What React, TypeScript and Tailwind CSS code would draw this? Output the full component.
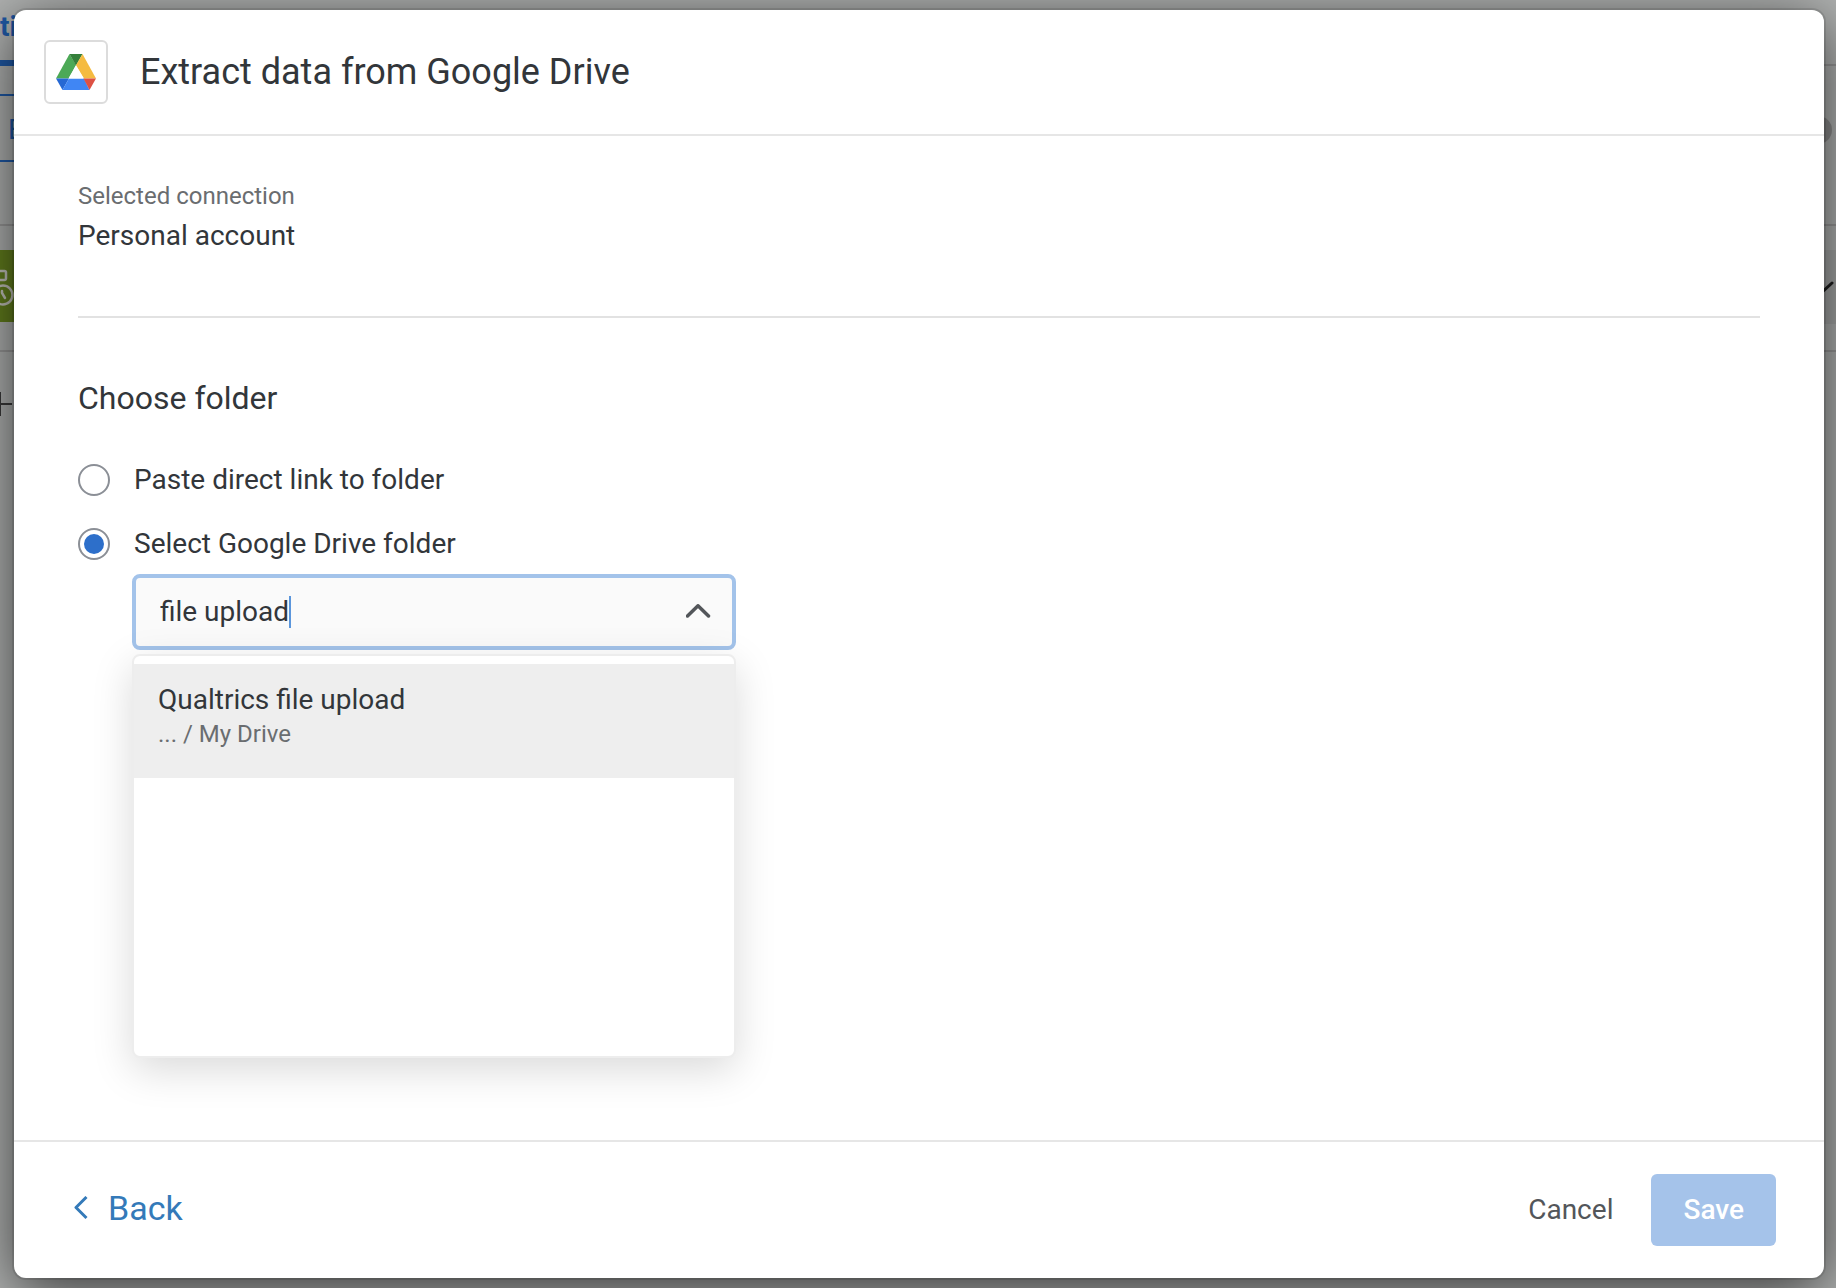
import React, { useState } from "react";

type FolderMode = "link" | "select";

type Folder = {
  name: string;
  path: string;
};

const folders: Folder[] = [{ name: "Qualtrics file upload", path: "... / My Drive" }];

const DriveLogo = () => (
  <svg viewBox="0 0 40 36" className="h-9 w-10" aria-hidden="true">
    <path d="M13.5 0 0 24.5h12.5L20 11z" fill="#4ca956" />
    <path d="M13.5 0h13L20 11.5z" fill="#35803b" />
    <path d="M26.5 0 20 11.2l8 13.3h12z" fill="#f5bb41" />
    <path d="M0 24.5h13L6.5 36z" fill="#2668d4" />
    <path d="M13 24.5h15L33.5 36H6.5z" fill="#4086f4" />
    <path d="M27.5 24.5H40L33.5 36z" fill="#dd5144" />
    <path d="M20 11.5 27.6 24.5H12.6z" fill="#fff" />
  </svg>
);

// The workflow editor, dimmed behind the dialog
const EditorPage = () => (
  <div className="min-h-screen bg-[#b0b2b1]" aria-hidden="true">
    <div className="flex h-[66px] justify-between">
      <div className="flex w-8 flex-col justify-end overflow-hidden border-b-6 border-[#1f5aa8]">
        <span className="pb-3 text-[28px] font-bold text-[#1f5aa8]">ti</span>
      </div>
      <div className="flex-1 border-b-2 border-[#989898]" />
    </div>
    <div className="flex h-40 items-start justify-between border-b-2 border-[#989898] pt-7">
      <div className="flex h-[68px] w-8 items-center border-y-2 border-[#1f5aa8] pt-1 pl-2">
        <span className="text-[28px] leading-8 text-[#1f5aa8]">E</span>
      </div>
      <div className="mt-[22px] mr-1 size-7 rounded-full bg-[#8c8c8c]" />
    </div>
    <div className="flex h-[126px] items-start justify-between border-b-2 border-[#989898] pt-6">
      <div className="flex h-[72px] w-8 items-center bg-[#637f1d]">
        <svg viewBox="0 0 14 40" className="h-10 w-3.5" fill="none" stroke="#c4c4bc" strokeWidth="2.500">
          <path d="M0 5h4.500a1.500 1.500 0 0 1 1.500 1.500v6a1.500 1.500 0 0 1-1.500 1.500H0" />
          <circle cx="3" cy="29" r="9.500" />
          <path d="M2 25v2l3 5" strokeLinecap="round" />
        </svg>
      </div>
      <div className="flex h-[74px] flex-1 items-center justify-end bg-[#a5a7a6]">
        <svg viewBox="0 0 14 14" className="mr-0.5 size-3.5" fill="none" stroke="#1e1e1e" strokeWidth="3" strokeLinecap="round">
          <path d="M12 3 0 14" />
        </svg>
      </div>
    </div>
    <svg viewBox="0 0 14 24" className="mt-10 h-6 w-3.5" stroke="#3a3a3a" strokeWidth="2">
      <path d="M0 0v24M0 12h12" />
    </svg>
  </div>
);

const App = () => {
  const [mode, setMode] = useState<FolderMode>("select");
  const [query, setQuery] = useState("file upload");

  const radioClass =
    "grid size-8 shrink-0 appearance-none place-items-center rounded-full border-2 border-[#8b8f96] bg-white before:size-5 before:rounded-full checked:before:bg-[#2d6fca]";

  return (
    <div className="relative min-h-screen overflow-hidden font-[Roboto,sans-serif] text-[#32363a]">
      <EditorPage />

      <div className="absolute inset-0 flex py-2.5 pr-3 pl-3.5">
        <div
          role="dialog"
          aria-labelledby="dialog-title"
          className="flex flex-1 flex-col rounded-xl bg-white shadow-[0_0_0_2px_rgba(0,0,0,0.1),0_12px_60px_rgba(0,0,0,0.7)]"
        >
          <header className="flex items-center gap-8 border-b-2 border-[#e6e6e6] px-[30px] py-[30px]">
            <div className="flex size-16 items-center justify-center rounded-md border-2 border-[#dcdcdc]">
              <DriveLogo />
            </div>
            <h1 id="dialog-title" className="text-[36px] leading-10">
              Extract data from Google Drive
            </h1>
          </header>

          <main className="flex-1 px-16 pt-11">
            <div className="border-b-2 border-[#e2e2e2] pb-15">
              <p className="text-[24px] leading-8 text-[#6a6d70]">Selected connection</p>
              <p className="mt-1 text-[28px] leading-10">Personal account</p>
            </div>

            <h2 className="mt-[58px] text-[32px] leading-11">Choose folder</h2>

            <div className="mt-10 flex flex-col gap-6">
              <label className="flex items-center gap-6 text-[28px] leading-10">
                <input
                  type="radio"
                  name="mode"
                  checked={mode === "link"}
                  onChange={() => setMode("link")}
                  className={radioClass}
                />
                Paste direct link to folder
              </label>
              <label className="flex items-center gap-6 text-[28px] leading-10">
                <input
                  type="radio"
                  name="mode"
                  checked={mode === "select"}
                  onChange={() => setMode("select")}
                  className={radioClass}
                />
                Select Google Drive folder
              </label>
            </div>

            <div className="relative mt-2.5 ml-[54px] max-w-[604px]">
              <div className="flex h-[76px] items-center rounded-lg border-4 border-[#a3c3ea] bg-[#fafafa] pr-5 pl-6">
                <div className="relative flex min-w-0 flex-1 items-center">
                  <input
                    type="text"
                    aria-label="Google Drive folder"
                    value={query}
                    onChange={(e) => setQuery(e.target.value)}
                    className="w-full bg-transparent text-[28px] leading-10 caret-[#5b96dc] outline-none"
                  />
                  <span className="pointer-events-none absolute left-0 flex text-[28px] leading-8">
                    <span className="invisible whitespace-pre">{query}</span>
                    <span className="h-8 w-0.5 bg-[#5b96dc]" />
                  </span>
                </div>
                <button type="button" aria-label="Close folder list">
                  <svg
                    viewBox="0 0 26 16"
                    className="h-4 w-[26px] text-[#53565a]"
                    fill="none"
                    stroke="currentColor"
                    strokeWidth="3.5"
                    strokeLinecap="round"
                    strokeLinejoin="round"
                  >
                    <path d="M1.500 12 12 1.800 22.500 12" />
                  </svg>
                </button>
              </div>

              <ul className="absolute top-20 right-0 left-0 h-[404px] rounded-lg border-2 border-[#ededed] bg-white pt-2 shadow-[0_12px_40px_rgba(0,0,0,0.15)]">
                {folders.map((folder) => (
                  <li key={folder.name}>
                    <button type="button" className="h-[114px] w-full bg-[#eeeeee] px-6 pb-2.5 text-left">
                      <span className="block text-[28px] leading-9">{folder.name}</span>
                      <span className="block text-[24px] leading-8 text-[#6a6d70]">{folder.path}</span>
                    </button>
                  </li>
                ))}
              </ul>
            </div>
          </main>

          <footer className="flex items-center justify-between border-t-2 border-[#e6e6e6] pt-8 pr-12 pb-8 pl-15">
            <a href="#" className="flex items-center gap-5 pb-1 text-[34px] leading-10 text-[#347ab9]">
              <svg viewBox="0 0 14 24" className="h-6 w-3.5" fill="none" stroke="currentColor" strokeWidth="3">
                <path d="M12.500 1 2 11.500l10.500 10.500" strokeLinejoin="round" />
              </svg>
              Back
            </a>
            <div className="flex items-center gap-[38px] text-[28px]">
              <button type="button" className="text-[#53565a]">
                Cancel
              </button>
              <button type="button" disabled className="h-[72px] rounded-md bg-[#a5c3ea] px-8 font-medium text-white">
                Save
              </button>
            </div>
          </footer>
        </div>
      </div>
    </div>
  );
};

export default App;
